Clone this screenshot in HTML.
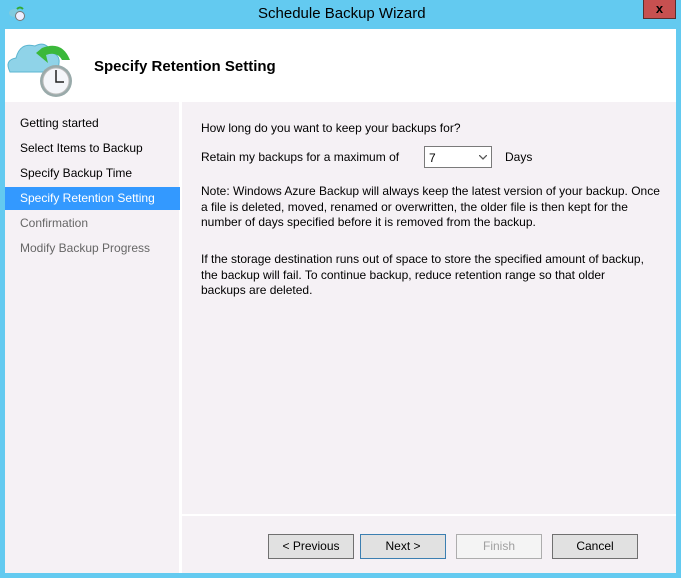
<!DOCTYPE html><html><head><style>
body{margin:0;width:681px;height:578px;background:#63caf0;position:relative;overflow:hidden;font-family:"Liberation Sans",sans-serif;font-size:12px;color:#000}
.a{position:absolute}
.btn{position:absolute;top:534px;width:84px;height:23px;border:1px solid #707070;background:#e1e1e1;text-align:center;line-height:23px;font-size:12px}
.nav{position:absolute;left:20px;font-size:12px}
.p{white-space:nowrap;line-height:15.5px}
</style></head><body>
<div class="a" style="left:258px;top:5px;font-size:15px;color:#000">Schedule Backup Wizard</div>
<div class="a" style="left:643px;top:0;width:33px;height:19px;background:#c75050;border:1px solid #5a2d2d;border-top:none;box-sizing:border-box;text-align:center;color:#000;font-weight:bold;font-size:13px;line-height:17px">x</div>
<svg class="a" style="left:8px;top:4px" width="18" height="18" viewBox="0 0 18 18"><ellipse cx="7" cy="9" rx="6" ry="4" fill="#7fcbe0"/><circle cx="12" cy="12" r="4.5" fill="#eef" stroke="#777"/><path d="M9 5 Q12 2 15 5" stroke="#3a3" stroke-width="2" fill="none"/></svg>
<div class="a" style="left:5px;top:29px;width:671px;height:544px;background:#fff"></div>
<svg class="a" style="left:4px;top:36px" width="72" height="64" viewBox="0 0 72 64"><path d="M6 36 Q0 24 12 22 Q16 6 31 10 Q42 4 48 17 Q58 19 54 32 Q52 36 46 36 L10 36 Z" fill="#8fd3e8" stroke="#5bb5d0"/><path d="M38 12 Q58 4 66 24 L58 24 Q53 15 42 19 L44 27 L32 17 Z" fill="#3bb83b"/><circle cx="52" cy="45" r="16" fill="#9aa" /><circle cx="52" cy="45" r="13" fill="#f4f6fa" stroke="#bbb"/><path d="M52 34 V46 H60" stroke="#222" stroke-width="1.5" fill="none"/></svg>
<div class="a" style="left:94px;top:58px;font-size:15px;font-weight:bold">Specify Retention Setting</div>
<div class="a" style="left:5px;top:102px;width:174px;height:471px;background:#f5f1f5"></div>
<div class="a" style="left:182px;top:102px;width:494px;height:412px;background:#f5f1f5"></div>
<div class="a" style="left:182px;top:516px;width:494px;height:57px;background:#f5f1f5"></div>
<div class="a" style="left:5px;top:187px;width:175px;height:23px;background:#3399ff"></div>
<div class="nav" style="top:116px">Getting started</div>
<div class="nav" style="top:141px">Select Items to Backup</div>
<div class="nav" style="top:166px">Specify Backup Time</div>
<div class="nav" style="top:191px;color:#fff">Specify Retention Setting</div>
<div class="nav" style="top:216px;color:#666">Confirmation</div>
<div class="nav" style="top:241px;color:#666">Modify Backup Progress</div>
<div class="a" style="left:201px;top:121px">How long do you want to keep your backups for?</div>
<div class="a" style="left:201px;top:150px">Retain my backups for a maximum of</div>
<div class="a" style="left:424px;top:146px;width:68px;height:22px;border:1px solid #7a7a7a;background:#fff;box-sizing:border-box"><span style="position:absolute;left:4px;top:4px">7</span><svg style="position:absolute;right:4px;top:8px" width="8" height="5"><path d="M0 0 L4 4 L8 0" stroke="#555" fill="none" stroke-width="1.3"/></svg></div>
<div class="a" style="left:505px;top:150px">Days</div>
<div class="a p" style="left:201px;top:184px">Note: Windows Azure Backup will always keep the latest version of your backup. Once<br>a file is deleted, moved, renamed or overwritten, the older file is then kept for the<br>number of days specified before it is removed from the backup.</div>
<div class="a p" style="left:201px;top:252px">If the storage destination runs out of space to store the specified amount of backup,<br>the backup will fail. To continue backup, reduce retention range so that older<br>backups are deleted.</div>
<div class="btn" style="left:268px">&lt; Previous</div>
<div class="btn" style="left:360px;border-color:#3c7fb1">Next &gt;</div>
<div class="btn" style="left:456px;border-color:#adadad;background:#f4f4f4;color:#a0a0a0">Finish</div>
<div class="btn" style="left:552px">Cancel</div>
</body></html>
